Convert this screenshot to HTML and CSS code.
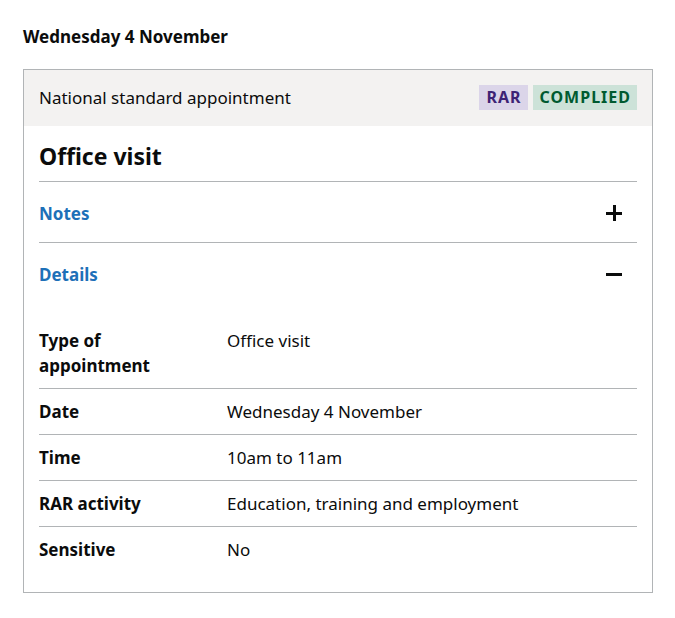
FILE: index.html
```html
<!DOCTYPE html>
<html lang="en">
<head>
<meta charset="utf-8">
<title>Appointment</title>
<link rel="stylesheet" href="styles.css">
</head>
<body>
<main class="page">
  <h2 class="day">Wednesday 4 November</h2>
  <section class="card">
    <header class="card-head">
      <span class="card-type">National standard appointment</span>
      <span class="tags">
        <strong class="tag tag-purple">RAR</strong>
        <strong class="tag tag-green">COMPLIED</strong>
      </span>
    </header>
    <div class="card-body">
      <h3 class="card-title">Office visit</h3>
      <div class="acc">
        <div class="acc-head">
          <span class="acc-label">Notes</span>
          <span class="acc-icon plus"></span>
        </div>
      </div>
      <div class="acc acc-open">
        <div class="acc-head">
          <span class="acc-label">Details</span>
          <span class="acc-icon minus"></span>
        </div>
        <dl class="summary">
          <div class="row"><dt>Type of appointment</dt><dd>Office visit</dd></div>
          <div class="row"><dt>Date</dt><dd>Wednesday 4 November</dd></div>
          <div class="row"><dt>Time</dt><dd>10am to 11am</dd></div>
          <div class="row"><dt>RAR activity</dt><dd>Education, training and employment</dd></div>
          <div class="row last"><dt>Sensitive</dt><dd>No</dd></div>
        </dl>
      </div>
    </div>
  </section>
</main>
</body>
</html>
```

FILE: styles.css
```css
* { box-sizing: border-box; }
html, body { margin: 0; padding: 0; background: #fff; }
body {
  font-family: "Noto Sans", "Liberation Sans", sans-serif;
  color: #0b0c0c;
  font-size: 17px;
}
.page { padding: 24px 22px 0 23px; width: 675px; }
.day {
  margin: 0 0 20px;
  font-size: 17px;
  line-height: 25px;
  font-weight: 700;
}
.card { border: 1px solid #b1b4b6; width: 630px; }
.card-head {
  background: #f3f2f1;
  display: flex;
  align-items: center;
  justify-content: space-between;
  padding: 0 15px 1px;
  height: 56px;
}
.card-type { font-size: 17px; line-height: 25px; }
.tags { display: flex; gap: 5px; }
.tag {
  font-size: 16px;
  font-weight: 700;
  letter-spacing: 1px;
  line-height: 25px;
  padding: 0 6px 0 7px;
  display: inline-block;
}
.tag-purple { background: #dbd5e9; color: #3d2375; }
.tag-green { background: #cce2d8; color: #005a30; }
.card-body { padding: 0 15px 20px; }
.card-title {
  margin: 0;
  padding: 15px 0 10px;
  font-size: 23px;
  line-height: 30px;
  font-weight: 700;
  border-bottom: 1px solid #b1b4b6;
}
.acc-head {
  display: flex;
  align-items: center;
  justify-content: space-between;
  height: 60px;
  padding: 2px 15px 0 0;
}
.acc { border-bottom: 1px solid #b1b4b6; }
.acc-open { border-bottom: 0; }
.acc-label {
  color: #1d70b8;
  font-weight: 700;
  font-size: 17px;
  line-height: 25px;
}
.acc-icon { position: relative; width: 16px; height: 16px; }
.acc-icon::before, .plus::after {
  content: "";
  position: absolute;
  background: #0b0c0c;
}
.acc-icon::before { left: 0; top: 6.5px; width: 16px; height: 3px; }
.plus::after { left: 6.5px; top: 0; width: 3px; height: 16px; }
.summary { margin: 15px 0 0; }
.row {
  display: grid;
  grid-template-columns: 188px 1fr;
  border-bottom: 1px solid #b1b4b6;
  padding: 10px 0;
}
.row.last { border-bottom: 0; }
.row dt { font-weight: 700; line-height: 25px; padding-right: 20px; }
.row dd { margin: 0; line-height: 25px; }
```
